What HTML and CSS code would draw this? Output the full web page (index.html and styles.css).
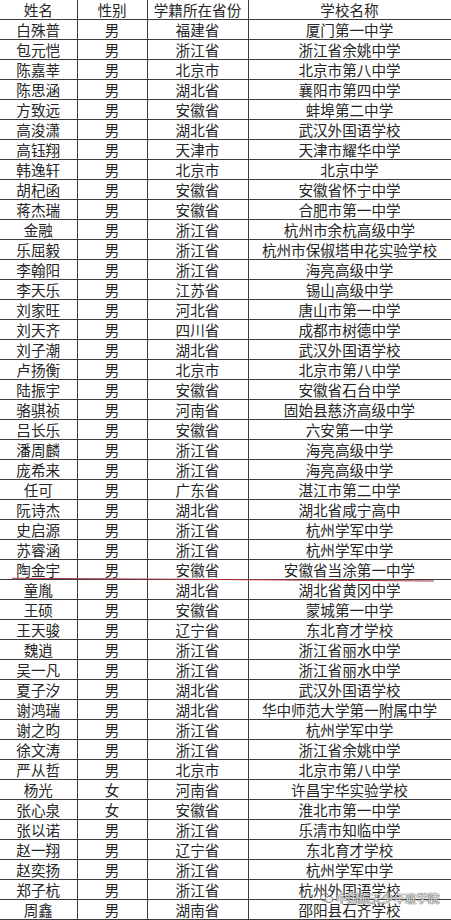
FILE: index.html
```html
<!DOCTYPE html>
<html lang="zh-CN">
<head>
<meta charset="utf-8">
<title>名单</title>
<link rel="stylesheet" href="styles.css">
</head>
<body>
<div class="sheet">
<table class="roster">
<colgroup><col class="c-name"><col class="c-sex"><col class="c-prov"><col class="c-school"></colgroup>
<thead>
<tr><th>姓名</th><th>性别</th><th>学籍所在省份</th><th>学校名称</th></tr>
</thead>
<tbody>
<tr><td>白殊普</td><td>男</td><td>福建省</td><td>厦门第一中学</td></tr>
<tr><td>包元恺</td><td>男</td><td>浙江省</td><td>浙江省余姚中学</td></tr>
<tr><td>陈嘉莘</td><td>男</td><td>北京市</td><td>北京市第八中学</td></tr>
<tr><td>陈思涵</td><td>男</td><td>湖北省</td><td>襄阳市第四中学</td></tr>
<tr><td>方致远</td><td>男</td><td>安徽省</td><td>蚌埠第二中学</td></tr>
<tr><td>高浚潇</td><td>男</td><td>湖北省</td><td>武汉外国语学校</td></tr>
<tr><td>高钰翔</td><td>男</td><td>天津市</td><td>天津市耀华中学</td></tr>
<tr><td>韩逸轩</td><td>男</td><td>北京市</td><td>北京中学</td></tr>
<tr><td>胡杞函</td><td>男</td><td>安徽省</td><td>安徽省怀宁中学</td></tr>
<tr><td>蒋杰瑞</td><td>男</td><td>安徽省</td><td>合肥市第一中学</td></tr>
<tr><td>金融</td><td>男</td><td>浙江省</td><td>杭州市余杭高级中学</td></tr>
<tr><td>乐屈毅</td><td>男</td><td>浙江省</td><td>杭州市保俶塔申花实验学校</td></tr>
<tr><td>李翰阳</td><td>男</td><td>浙江省</td><td>海亮高级中学</td></tr>
<tr><td>李天乐</td><td>男</td><td>江苏省</td><td>锡山高级中学</td></tr>
<tr><td>刘家旺</td><td>男</td><td>河北省</td><td>唐山市第一中学</td></tr>
<tr><td>刘天齐</td><td>男</td><td>四川省</td><td>成都市树德中学</td></tr>
<tr><td>刘子潮</td><td>男</td><td>湖北省</td><td>武汉外国语学校</td></tr>
<tr><td>卢扬衡</td><td>男</td><td>北京市</td><td>北京市第八中学</td></tr>
<tr><td>陆振宇</td><td>男</td><td>安徽省</td><td>安徽省石台中学</td></tr>
<tr><td>骆骐祯</td><td>男</td><td>河南省</td><td>固始县慈济高级中学</td></tr>
<tr><td>吕长乐</td><td>男</td><td>安徽省</td><td>六安第一中学</td></tr>
<tr><td>潘周麟</td><td>男</td><td>浙江省</td><td>海亮高级中学</td></tr>
<tr><td>庞希来</td><td>男</td><td>浙江省</td><td>海亮高级中学</td></tr>
<tr><td>任可</td><td>男</td><td>广东省</td><td>湛江市第二中学</td></tr>
<tr><td>阮诗杰</td><td>男</td><td>湖北省</td><td>湖北省咸宁高中</td></tr>
<tr><td>史启源</td><td>男</td><td>浙江省</td><td>杭州学军中学</td></tr>
<tr><td>苏睿涵</td><td>男</td><td>浙江省</td><td>杭州学军中学</td></tr>
<tr class="marked"><td>陶金宇</td><td>男</td><td>安徽省</td><td>安徽省当涂第一中学</td></tr>
<tr><td>童胤</td><td>男</td><td>湖北省</td><td>湖北省黄冈中学</td></tr>
<tr><td>王硕</td><td>男</td><td>安徽省</td><td>蒙城第一中学</td></tr>
<tr><td>王天骏</td><td>男</td><td>辽宁省</td><td>东北育才学校</td></tr>
<tr><td>魏逍</td><td>男</td><td>浙江省</td><td>浙江省丽水中学</td></tr>
<tr><td>吴一凡</td><td>男</td><td>浙江省</td><td>浙江省丽水中学</td></tr>
<tr><td>夏子汐</td><td>男</td><td>湖北省</td><td>武汉外国语学校</td></tr>
<tr><td>谢鸿瑞</td><td>男</td><td>湖北省</td><td>华中师范大学第一附属中学</td></tr>
<tr><td>谢之昀</td><td>男</td><td>浙江省</td><td>杭州学军中学</td></tr>
<tr><td>徐文涛</td><td>男</td><td>浙江省</td><td>浙江省余姚中学</td></tr>
<tr><td>严从哲</td><td>男</td><td>北京市</td><td>北京市第八中学</td></tr>
<tr><td>杨光</td><td>女</td><td>河南省</td><td>许昌宇华实验学校</td></tr>
<tr><td>张心泉</td><td>女</td><td>安徽省</td><td>淮北市第一中学</td></tr>
<tr><td>张以诺</td><td>男</td><td>浙江省</td><td>乐清市知临中学</td></tr>
<tr><td>赵一翔</td><td>男</td><td>辽宁省</td><td>东北育才学校</td></tr>
<tr><td>赵奕扬</td><td>男</td><td>浙江省</td><td>杭州学军中学</td></tr>
<tr><td>郑子杭</td><td>男</td><td>浙江省</td><td>杭州外国语学校</td></tr>
<tr><td>周鑫</td><td>男</td><td>湖南省</td><td>邵阳县石齐学校</td></tr>
</tbody>
</table>
<svg class="pen-mark" width="451" height="10" viewBox="0 0 451 10" aria-hidden="true">
<path d="M12 2.2 Q 220 3.6 434 5" fill="none" stroke="#a8323f" stroke-width="1.1"/>
</svg>
<div class="watermark">
<svg class="wm-icon" width="14" height="11" viewBox="0 0 14 11" aria-hidden="true">
<ellipse cx="5" cy="4.5" rx="4.4" ry="3.6" fill="none" stroke="#7a7a7a" stroke-width="1"/>
<ellipse cx="9" cy="6.5" rx="3.8" ry="3.1" fill="rgba(255,255,255,0.8)" stroke="#7a7a7a" stroke-width="1"/>
</svg>
<span class="wm-text">中国航天少年班学院</span>
</div>
</div>
</body>
</html>
```
FILE: styles.css
```css
html, body {
  margin: 0;
  padding: 0;
  background: #ffffff;
}

.sheet {
  position: relative;
  width: 451px;
  height: 920px;
  overflow: hidden;
}

.roster {
  border-collapse: collapse;
  table-layout: fixed;
  width: 451px;
  font-family: "Noto Sans CJK SC", "Noto Sans", sans-serif;
  font-size: 14.6px;
  color: #262626;
}

.c-name { width: 77px; }
.c-sex { width: 70px; }
.c-prov { width: 101px; }
.c-school { width: 203px; }

.roster th,
.roster td {
  height: 19px;
  padding: 0;
  line-height: 19px;
  text-align: center;
  font-weight: 400;
  white-space: nowrap;
  border: 1px solid #3c3c3c;
}

.roster th:first-child,
.roster td:first-child {
  border-left: none;
}

.roster thead th {
  border-top: none;
}

.pen-mark {
  position: absolute;
  left: 0;
  top: 576px;
}

.watermark {
  position: absolute;
  left: 320px;
  top: 891px;
  display: flex;
  align-items: center;
  gap: 2px;
}

.wm-text {
  font-family: "Noto Sans CJK SC", sans-serif;
  font-size: 11.5px;
  line-height: 14px;
  color: rgba(250, 250, 250, 0.9);
  text-shadow: 0 0 1px #5a5a5a, 0 0 1px #5a5a5a, 0 0 1px #5a5a5a;
}
```
